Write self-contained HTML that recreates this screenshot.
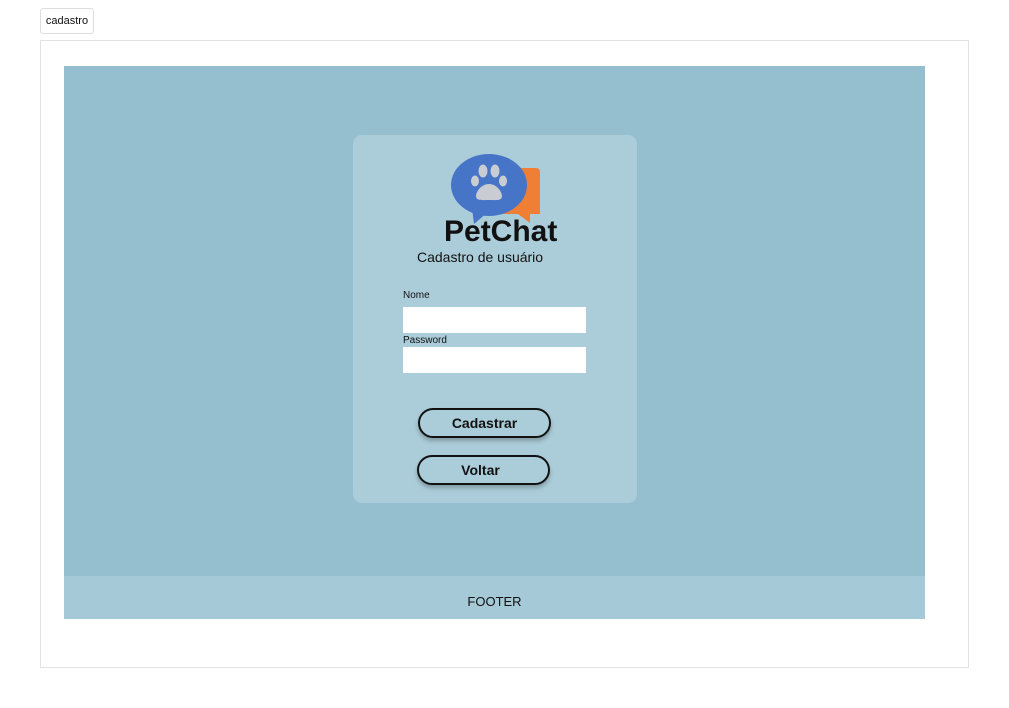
<!DOCTYPE html>
<html><head><style>
body{margin:0;width:1009px;height:708px;background:#fff;font-family:"Liberation Sans",sans-serif;position:relative;overflow:hidden}
.tab{position:absolute;left:40px;top:8px;width:52px;height:24px;border:1px solid #ddd;border-radius:3px;font-size:11px;line-height:24px;text-align:center;color:#111}
.frame{position:absolute;left:40px;top:40px;width:927px;height:626px;border:1px solid #e2e2e2}
.main{position:absolute;left:64px;top:66px;width:861px;height:510px;background:#95bfcf}
.footer{position:absolute;left:64px;top:576px;width:861px;height:43px;background:#a5c9d7;text-align:center;line-height:52px;font-size:13px;color:#111}
.card{position:absolute;left:353px;top:135px;width:284px;height:368px;background:#abcdd9;border-radius:9px}
.lbl{position:absolute;font-size:10px;color:#111}
.inp{position:absolute;left:403px;width:183px;height:26px;background:#fff}
.btn{position:absolute;width:129px;height:26px;border:2px solid #111;border-radius:15px;box-shadow:0 3px 4px rgba(0,0,0,.25);text-align:center;line-height:26px;font-weight:bold;font-size:14px;color:#111}
</style></head><body>
<div class="tab">cadastro</div>
<div class="frame"></div>
<div class="main"></div>
<div class="footer">FOOTER</div>
<div class="card"></div>
<svg style="position:absolute;left:440px;top:148px" width="125" height="100">
<path d="M55 20 h41 a4 4 0 0 1 4 4 v42 l-10 0 l0 9 l-12 -9 h-23z" fill="#ee7f34"/>
<ellipse cx="49" cy="37" rx="38" ry="31" fill="#4674c6"/>
<path d="M32 60 l2 16 l14 -12z" fill="#4674c6"/>
<g fill="#c9ccd2"><path d="M49 36 c-8 0 -13 8 -13 12 c0 5 6 4 13 4 c7 0 13 1 13 -4 c0 -4 -5 -12 -13 -12z"/><ellipse cx="43" cy="23" rx="4.5" ry="6.5"/><ellipse cx="55" cy="23" rx="4.5" ry="6.5"/><ellipse cx="35" cy="33" rx="4" ry="5.5"/><ellipse cx="63" cy="33" rx="4" ry="5.5"/></g>
<text x="4" y="93" font-family="Liberation Sans" font-weight="bold" font-size="30" fill="#111">PetChat</text>
</svg>
<div style="position:absolute;left:417px;top:249px;font-size:14px;color:#111">Cadastro de usuário</div>
<div class="lbl" style="left:403px;top:290px">Nome</div>
<div class="inp" style="top:307px"></div>
<div class="lbl" style="left:403px;top:335px">Password</div>
<div class="inp" style="top:347px"></div>
<div class="btn" style="left:418px;top:408px">Cadastrar</div>
<div class="btn" style="left:417px;top:455px;text-indent:-6px">Voltar</div>
</body></html>
